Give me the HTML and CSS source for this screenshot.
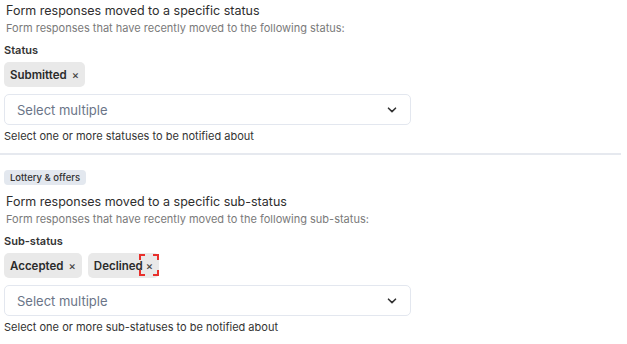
FILE: index.html
```html
<!DOCTYPE html>
<html>
<head>
<meta charset="utf-8">
<link rel="stylesheet" href="styles.css">
</head>
<body>
<div class="page">
  <section class="group">
    <div class="heading">
      <div class="title">Form responses moved to a specific status</div>
      <div class="subtitle">Form responses that have recently moved to the following status:</div>
    </div>
    <div class="label">Status</div>
    <div class="chips">
      <span class="chip">Submitted <span class="x">×</span></span>
    </div>
    <div class="select">
      <span class="placeholder">Select multiple</span>
      <svg class="chev" width="10" height="6" viewBox="0 0 10 6"><path d="M1.5 1.2 L5 4.6 L8.5 1.2" fill="none" stroke="#333" stroke-width="1.6" stroke-linecap="round" stroke-linejoin="round"/></svg>
    </div>
    <div class="help">Select one or more statuses to be notified about</div>
  </section>
  <hr class="divider">
  <section class="group">
    <span class="badge">Lottery &amp; offers</span>
    <div class="heading">
      <div class="title">Form responses moved to a specific sub-status</div>
      <div class="subtitle">Form responses that have recently moved to the following sub-status:</div>
    </div>
    <div class="label">Sub-status</div>
    <div class="chips">
      <span class="chip">Accepted <span class="x">×</span></span>
      <span class="chip">Declined<span class="x focus">×<svg class="mark" width="20" height="22" viewBox="0 0 20 22"><path d="M1 6 V1 H6 M14 1 H19 V6 M19 16 V21 H14 M6 21 H1 V16" fill="none" stroke="#e8302c" stroke-width="2"/></svg></span></span>
    </div>
    <div class="select">
      <span class="placeholder">Select multiple</span>
      <svg class="chev" width="10" height="6" viewBox="0 0 10 6"><path d="M1.5 1.2 L5 4.6 L8.5 1.2" fill="none" stroke="#333" stroke-width="1.6" stroke-linecap="round" stroke-linejoin="round"/></svg>
    </div>
    <div class="help">Select one or more sub-statuses to be notified about</div>
  </section>
</div>
</body>
</html>
```
FILE: styles.css
```css
html, body {
  margin: 0;
  padding: 0;
  background: #ffffff;
}
body {
  font-family: Inter, "Noto Sans", sans-serif;
  color: #2b2b2b;
}
.page {
  width: 621px;
  padding-top: 2px;
}
.group {
  display: flex;
  flex-direction: column;
  align-items: flex-start;
  padding: 0 4px;
  width: 407px;
}
.heading {
  padding-left: 2px;
}
.title {
  font-size: 12.5px;
  line-height: 17px;
  color: #2e2e2e;
}
.subtitle {
  font-size: 11px;
  line-height: 15px;
  color: #7a7a7a;
  margin-top: 2px;
}
.label {
  font-size: 11px;
  font-weight: 600;
  line-height: 14px;
  color: #333;
  margin-top: 7px;
}
.chips {
  display: flex;
  gap: 6px;
  margin-top: 5px;
}
.chip {
  display: inline-flex;
  align-items: center;
  height: 25px;
  padding: 0 6px 0 6px;
  background: #e9e9e9;
  border-radius: 5px;
  font-size: 11.5px;
  font-weight: 600;
  color: #2b2b2b;
}
.x {
  position: relative;
  display: inline-block;
  margin-left: 5px;
  font-size: 11px;
  font-weight: 500;
  color: #444;
}
.focus {
  margin-left: 3px;
}
.mark {
  position: absolute;
  left: -7px;
  top: -5px;
}
.select {
  box-sizing: border-box;
  width: 407px;
  height: 31px;
  margin-top: 7px;
  border: 1px solid #e3e7ef;
  border-radius: 5px;
  display: flex;
  align-items: center;
  justify-content: space-between;
  padding: 0 13px 0 12px;
}
.placeholder {
  font-size: 13px;
  color: #6b7588;
}
.help {
  font-size: 11px;
  line-height: 14px;
  color: #333;
  margin-top: 4px;
}
.divider {
  border: 0;
  height: 2px;
  background: #e6e9ef;
  margin: 10px 0 15px 0;
  width: 621px;
}
.badge {
  font-size: 9.5px;
  font-weight: 500;
  line-height: 15px;
  padding: 0 6px;
  background: #e3e8ef;
  border-radius: 4px;
  color: #333;
  margin-bottom: 8px;
}
```
